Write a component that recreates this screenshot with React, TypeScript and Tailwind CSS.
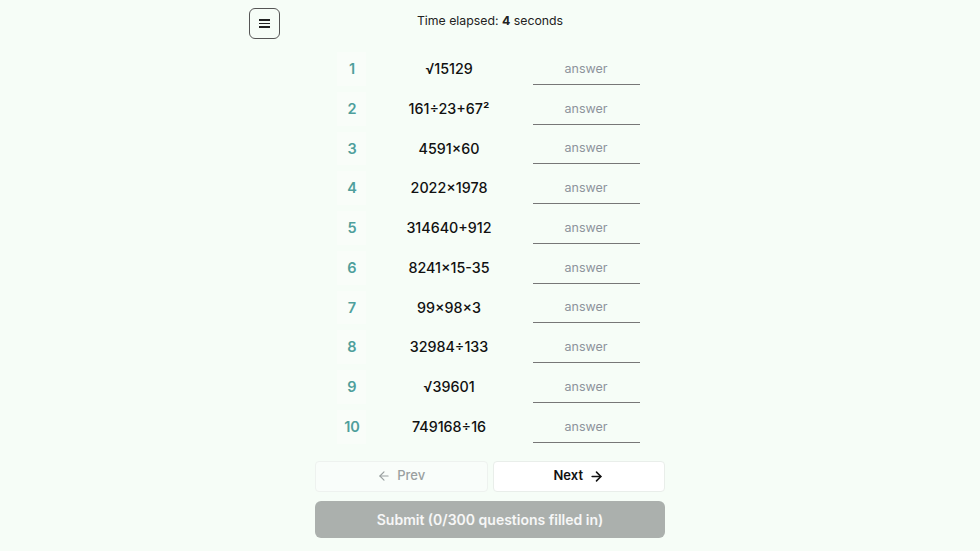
import React, { useState } from "react";
import { ArrowLeft, ArrowRight } from "lucide-react";

const questions = [
  "√15129",
  "161÷23+67²",
  "4591×60",
  "2022×1978",
  "314640+912",
  "8241×15-35",
  "99×98×3",
  "32984÷133",
  "√39601",
  "749168÷16",
];

export default function App() {
  const [answers, setAnswers] = useState<string[]>(questions.map(() => ""));
  const filled = answers.filter((a) => a.trim() !== "").length;

  return (
    <div
      className="min-h-screen bg-[#f6fdf7] text-[#111]"
      style={{ fontFamily: "Inter, 'Noto Sans', sans-serif" }}
    >
      <div className="relative mx-auto w-[482px] pt-2">
        <button className="flex flex-col justify-center items-center gap-[2px] border border-[#555] rounded-md w-[31px] h-[31px] bg-transparent">
          <span className="block w-[11px] h-[1.6px] bg-[#222]" />
          <span className="block w-[11px] h-[1.6px] bg-[#222]" />
          <span className="block w-[11px] h-[1.6px] bg-[#222]" />
        </button>
        <div className="absolute inset-x-0 top-[12px] text-center text-[12.3px] text-[#222]">
          Time elapsed: <span className="font-bold">4</span> seconds
        </div>
      </div>

      <div className="mx-auto w-[350px] mt-[10px]">
        <div className="pr-[4px]">
          <table className="mx-auto border-collapse">
            <tbody>
              {questions.map((q, i) => (
                <tr key={i} className="h-[39.75px]">
                  <td className="w-[29px] p-0 text-center">
                    <div className="bg-white/30 py-[6px] pl-[2px] font-semibold text-[14.5px] text-[#4f9f9c]">
                      {i + 1}
                    </div>
                  </td>
                  <td className="w-[167px] p-0 text-center font-medium text-[14.3px] text-[#111]">
                    {q}
                  </td>
                  <td className="p-0 w-[107px]">
                    <input
                      value={answers[i]}
                      onChange={(e) => {
                        const next = [...answers];
                        next[i] = e.target.value;
                        setAnswers(next);
                      }}
                      placeholder="answer"
                      className="block border-b border-[#777] w-[107px] h-[32px] bg-transparent text-center text-[12.5px] placeholder:text-[#8d939c] outline-none"
                    />
                  </td>
                </tr>
              ))}
            </tbody>
          </table>
        </div>

        <div className="flex gap-[5px] mt-[14px]">
          <button className="flex flex-1 justify-center items-center gap-[6px] border border-[#eef2ef] rounded bg-[#f9fdfa] h-[31px] font-medium text-[13px] text-[#9aa0a0]">
            <ArrowLeft className="w-[14px] h-[14px]" strokeWidth={2} />
            Prev
          </button>
          <button className="flex flex-1 justify-center items-center gap-[6px] border border-[#e9eeea] rounded bg-white h-[31px] font-semibold text-[13px] text-[#111]">
            Next
            <ArrowRight className="w-[15px] h-[15px]" strokeWidth={2.5} />
          </button>
        </div>

        <button className="block w-full mt-[9px] rounded-md bg-[#abb0ad] h-[37px] font-semibold text-[14px] text-white/90">
          Submit ({filled}/300 questions filled in)
        </button>
      </div>
    </div>
  );
}
